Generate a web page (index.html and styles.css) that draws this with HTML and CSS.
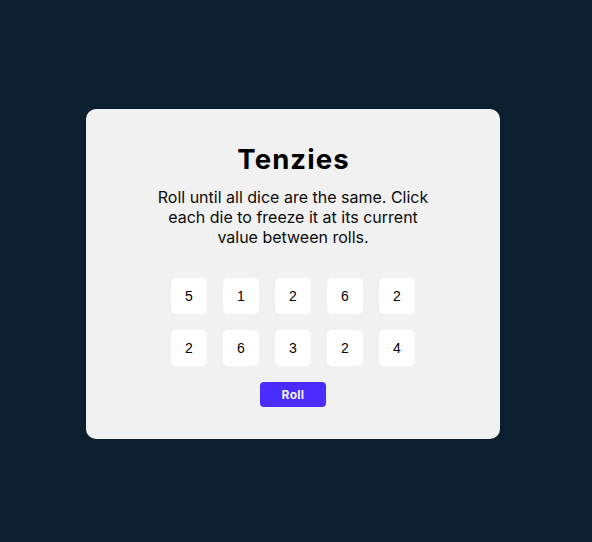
FILE: index.html
```html
<!DOCTYPE html>
<html lang="en">
<head>
<meta charset="utf-8">
<title>Tenzies</title>
<link rel="stylesheet" href="styles.css">
</head>
<body>
<main class="page">
  <section class="card">
    <h1 class="title">Tenzies</h1>
    <p class="instructions">Roll until all dice are the same. Click each die to freeze it at its current value between rolls.</p>
    <div class="dice">
      <button class="die">5</button>
      <button class="die">1</button>
      <button class="die">2</button>
      <button class="die">6</button>
      <button class="die">2</button>
      <button class="die">2</button>
      <button class="die">6</button>
      <button class="die">3</button>
      <button class="die">2</button>
      <button class="die">4</button>
    </div>
    <button class="roll">Roll</button>
  </section>
</main>
</body>
</html>
```

FILE: styles.css
```css
* { box-sizing: border-box; }
html, body { margin: 0; padding: 0; }
body {
  background: #0b1f2e;
  font-family: Inter, "Noto Sans", sans-serif;
}
.page {
  min-height: 542px;
  display: flex;
  align-items: center;
  justify-content: center;
  padding: 6px 6px 0 0;
}
.card {
  width: 414px;
  height: 330px;
  background: #f1f1f1;
  border-radius: 10px;
  padding: 31px 0 32px;
  display: flex;
  flex-direction: column;
  align-items: center;
}
.title {
  margin: 0;
  font-size: 27.5px;
  line-height: 39px;
  font-weight: 700;
  letter-spacing: 1.1px;
  text-indent: 1.1px;
  color: #000;
}
.instructions {
  margin: 8px 0 0;
  max-width: 290px;
  text-align: center;
  font-size: 16px;
  line-height: 20px;
  color: #0b0b0b;
}
.dice {
  margin-top: 31px;
  display: grid;
  grid-template-columns: repeat(5, 36px);
  grid-auto-rows: 36px;
  gap: 16px;
}
.die {
  border: none;
  background: #fff;
  border-radius: 5px;
  font-family: "Liberation Sans", Arial, sans-serif;
  font-size: 14px;
  color: #000;
  padding: 0;
}
.roll {
  margin-top: 16px;
  width: 66px;
  height: 25px;
  border: none;
  border-radius: 4px;
  background: #4a2cff;
  color: #f2f2f2;
  font-family: Inter, sans-serif;
  font-weight: 700;
  font-size: 12px;
  letter-spacing: 0.3px;
  padding: 0;
}
```
